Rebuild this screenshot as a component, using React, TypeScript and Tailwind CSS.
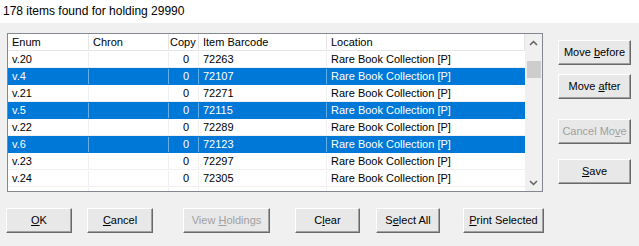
import React from "react"

interface Row {
  enumv: string
  chron: string
  copy: string
  barcode: string
  location: string
  selected?: boolean
}

const rows: Row[] = [
  { enumv: "v.20", chron: "", copy: "0", barcode: "72263", location: "Rare Book Collection [P]" },
  { enumv: "v.4", chron: "", copy: "0", barcode: "72107", location: "Rare Book Collection [P]", selected: true },
  { enumv: "v.21", chron: "", copy: "0", barcode: "72271", location: "Rare Book Collection [P]" },
  { enumv: "v.5", chron: "", copy: "0", barcode: "72115", location: "Rare Book Collection [P]", selected: true },
  { enumv: "v.22", chron: "", copy: "0", barcode: "72289", location: "Rare Book Collection [P]" },
  { enumv: "v.6", chron: "", copy: "0", barcode: "72123", location: "Rare Book Collection [P]", selected: true },
  { enumv: "v.23", chron: "", copy: "0", barcode: "72297", location: "Rare Book Collection [P]" },
  { enumv: "v.24", chron: "", copy: "0", barcode: "72305", location: "Rare Book Collection [P]" },
  { enumv: "v.25", chron: "", copy: "0", barcode: "72313", location: "Rare Book Collection [P]" },
]

const cols = "grid grid-cols-[81px_80px_30px_128px_198px]"

function Btn({
  children,
  w,
  disabled,
  className = "",
}: {
  children: React.ReactNode
  w: string
  disabled?: boolean
  className?: string
}) {
  return (
    <div
      className={`${w} h-[25px] flex items-center justify-center bg-[#e8e8e8] border border-t-white border-l-white border-r-[#696969] border-b-[#696969] shadow-[inset_-1px_-1px_0_#a0a0a0] text-[11px] ${
        disabled ? "text-[#a0a0a0]" : "text-black"
      } ${className}`}
    >
      {children}
    </div>
  )
}

function Chevron({ up }: { up?: boolean }) {
  return (
    <svg width="9" height="6" viewBox="0 0 9 6">
      <path
        d={up ? "M1 5 L4.5 1.5 L8 5" : "M1 1 L4.5 4.5 L8 1"}
        fill="none"
        stroke="#606060"
        strokeWidth="1.5"
      />
    </svg>
  )
}

export default function App() {
  return (
    <div
      className="w-[639px] h-[246px] bg-[#f0f0f0] overflow-hidden"
      style={{ fontFamily: '"Liberation Sans", Arial, sans-serif' }}
    >
      {/* title band */}
      <div className="h-[23px] bg-white pl-[3px] pt-[4px] text-[12px] leading-[14px] text-black">
        178 items found for holding 29990
      </div>

      <div className="flex pt-[10px]">
        {/* list view */}
        <div className="ml-[7px] w-[536px] h-[159px] border border-[#828790] bg-white flex overflow-hidden">
          <div className="w-[517px] overflow-hidden">
            <div className={`${cols} h-[17px] border-b border-[#e5e5e5] text-[11px] leading-[16px] text-black`}>
              <div className="pl-[4px] border-r border-[#e5e5e5]">Enum</div>
              <div className="pl-[4px] border-r border-[#e5e5e5]">Chron</div>
              <div className="pl-[1px] border-r border-[#e5e5e5]">Copy</div>
              <div className="pl-[4px] border-r border-[#e5e5e5]">Item Barcode</div>
              <div className="pl-[4px] border-r border-[#e5e5e5]">Location</div>
            </div>
            {rows.map((r) => {
              const sep = r.selected ? "border-r border-[#66aee7]" : "border-r border-[#f0f0f0]"
              return (
                <div
                  key={r.enumv}
                  className={`${cols} h-[17px] text-[11px] leading-[15px] pt-[1px] border-b ${
                    r.selected ? "bg-[#0078d7] text-white border-[#0078d7]" : "text-black border-[#f0f0f0]"
                  }`}
                >
                  <div className={`pl-[4px] ${sep}`}>{r.enumv}</div>
                  <div className={`pl-[4px] ${sep}`}>{r.chron}</div>
                  <div className={`pr-[9px] text-right ${sep}`}>{r.copy}</div>
                  <div className={`pl-[4px] ${sep}`}>{r.barcode}</div>
                  <div className="pl-[4px]">{r.location}</div>
                </div>
              )
            })}
          </div>
          {/* scrollbar */}
          <div className="w-[17px] h-full bg-[#f0f0f0] flex flex-col">
            <div className="h-[17px] flex items-center justify-center">
              <Chevron up />
            </div>
            <div className="mt-[10px] ml-[2px] w-[14px] h-[17px] bg-[#cdcdcd]" />
            <div className="flex-1" />
            <div className="h-[17px] flex items-center justify-center">
              <Chevron />
            </div>
          </div>
        </div>

        {/* side buttons */}
        <div className="ml-[15px] mt-[7px] flex flex-col">
          <Btn w="w-[73px]">
            <span>
              Move <u>b</u>efore
            </span>
          </Btn>
          <Btn w="w-[73px]" className="mt-[9px]">
            <span>
              Move <u>a</u>fter
            </span>
          </Btn>
          <Btn w="w-[73px]" className="mt-[20px]" disabled>
            <span>
              Cancel Mo<u>v</u>e
            </span>
          </Btn>
          <Btn w="w-[73px]" className="mt-[15px]">
            <span>
              <u>S</u>ave
            </span>
          </Btn>
        </div>
      </div>

      {/* bottom buttons */}
      <div className="flex mt-[16px] pl-[6px]">
        <Btn w="w-[66px]">
          <span>
            <u>O</u>K
          </span>
        </Btn>
        <Btn w="w-[66px]" className="ml-[15px]">
          <span>
            <u>C</u>ancel
          </span>
        </Btn>
        <Btn w="w-[87px]" className="ml-[30px]" disabled>
          <span>
            View <u>H</u>oldings
          </span>
        </Btn>
        <Btn w="w-[65px]" className="ml-[25px]">
          <span>
            C<u>l</u>ear
          </span>
        </Btn>
        <Btn w="w-[64px]" className="ml-[16px]">
          <span>
            S<u>e</u>lect All
          </span>
        </Btn>
        <Btn w="w-[81px]" className="ml-[23px]">
          <span>
            <u>P</u>rint Selected
          </span>
        </Btn>
      </div>
    </div>
  )
}
